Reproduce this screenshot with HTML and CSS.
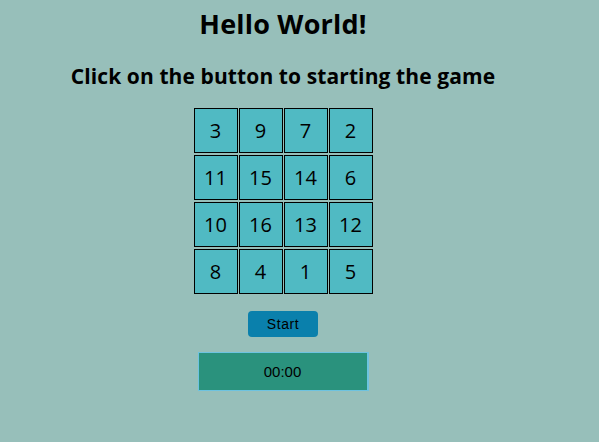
FILE: index.html
```html
<!DOCTYPE html>
<html>
<head>
<meta charset="utf-8">
<link rel="stylesheet" href="styles.css">
</head>
<body>
<div class="page">
  <h1 class="title">Hello World!</h1>
  <h2 class="subtitle">Click on the button to starting the game</h2>
  <div class="board">
    <div class="tile">3</div><div class="tile">9</div><div class="tile">7</div><div class="tile">2</div>
    <div class="tile">11</div><div class="tile">15</div><div class="tile">14</div><div class="tile">6</div>
    <div class="tile">10</div><div class="tile">16</div><div class="tile">13</div><div class="tile">12</div>
    <div class="tile">8</div><div class="tile">4</div><div class="tile">1</div><div class="tile">5</div>
  </div>
  <button class="start">Start</button>
  <div class="timer">00:00</div>
</div>
</body>
</html>
```
FILE: styles.css
```css
html, body {
  margin: 0;
  padding: 0;
  background: #97bfba;
}
body {
  padding: 0 8px;
  font-family: "Open Sans", "DejaVu Sans", sans-serif;
  color: #000;
}
.page {
  width: 550px;
  display: flex;
  flex-direction: column;
  align-items: center;
}
.title {
  margin: 6px 0 0;
  font-size: 27px;
  line-height: 36px;
  font-weight: bold;
  letter-spacing: 0.2px;
}
.subtitle {
  margin: 20px 0 0;
  font-size: 21px;
  line-height: 28px;
  font-weight: bold;
  letter-spacing: 0.1px;
}
.board {
  margin-top: 18px;
  display: grid;
  grid-template-columns: repeat(4, 44px);
  grid-auto-rows: 45px;
  column-gap: 1px;
  row-gap: 2px;
}
.tile {
  box-sizing: border-box;
  border: 1px solid #000;
  background: #50bac3;
  display: flex;
  align-items: center;
  justify-content: center;
  font-size: 20px;
  font-weight: 500;
}
.start {
  margin-top: 17px;
  width: 70px;
  height: 26px;
  border: none;
  border-radius: 4px;
  background: #0a80ac;
  color: #000;
  font-family: "Liberation Sans", Arial, sans-serif;
  font-size: 14px;
  letter-spacing: 0.6px;
  padding: 0;
}
.timer {
  margin-top: 15px;
  box-sizing: border-box;
  width: 171px;
  height: 39px;
  border: 1px solid #6ec3e0;
  border-right-width: 2px;
  background: #2a927d;
  display: flex;
  align-items: center;
  justify-content: center;
  font-family: "Liberation Sans", Arial, sans-serif;
  font-size: 15px;
}
```
